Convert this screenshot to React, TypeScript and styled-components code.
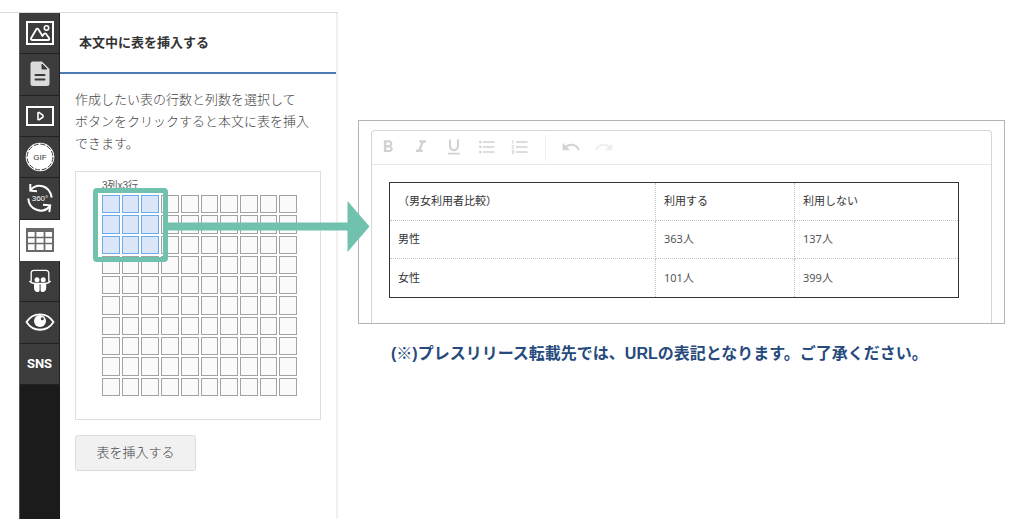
import React, { useState } from 'react';
import styled, { createGlobalStyle } from 'styled-components';
import {
  MdFormatBold,
  MdFormatItalic,
  MdFormatUnderlined,
  MdFormatListBulleted,
  MdFormatListNumbered,
  MdUndo,
  MdRedo,
} from 'react-icons/md';

const sans = `"Liberation Sans", "Noto Sans CJK JP", sans-serif`;
const teal = '#70c1ae';

const GlobalStyle = createGlobalStyle`
  *, *::before, *::after { box-sizing: border-box; }
  body { margin: 0; background: #fff; color: #444; font-family: ${sans}; font-size: 13px; }
  button { font-family: inherit; cursor: pointer; }
  h2, p, ul { margin: 0; padding: 0; }
`;

const Page = styled.div`
  display: flex;
  align-items: stretch;
  min-height: 100vh;
  padding: 12px 0;
`;

const Composer = styled.aside`
  display: flex;
  flex: 0 0 338px;
  padding-left: 19px;
  border-top: 1px solid #dcdcdc;
`;

const Rail = styled.nav`
  flex: 0 0 41px;
  background: #1b1b1b;
  border-left: 1px solid #555;
`;

const RailList = styled.ul`
  display: grid;
  grid-template-rows: repeat(9, 1fr);
  height: 372px;
  list-style: none;
`;

const RailButton = styled.button<{ $active?: boolean }>`
  display: flex;
  align-items: center;
  justify-content: center;
  width: 100%;
  height: 100%;
  padding: 0;
  border: 0;
  border-right: 1px solid ${(p) => (p.$active ? '#fff' : '#222')};
  border-bottom: 1px solid ${(p) => (p.$active ? '#fff' : '#222')};
  background: ${(p) => (p.$active ? '#fff' : '#3c3c3c')};
  color: ${(p) => (p.$active ? '#6a6a6a' : '#fff')};
  font: 700 13px Roboto, sans-serif;

  svg { display: block; }
`;

const Panel = styled.section`
  flex: 1;
  min-width: 0;
  border-right: 2px solid #f0f0f0;
`;

const PanelTitle = styled.h2`
  padding: 19px;
  border-bottom: 2px solid #4d7ab5;
  color: #333;
  font-size: 13px;
  line-height: 21px;
  font-weight: 700;
`;

const PanelBody = styled.div`
  padding: 15px;
`;

const Description = styled.p`
  color: #444;
  font-size: 13px;
  line-height: 22px;
  font-weight: 300;
`;

const Picker = styled.div`
  margin: 16px 0 15px;
  padding: 6px 23px 23px 26px;
  border: 1px solid #dedede;
`;

const PickerLabel = styled.div`
  height: 17px;
  color: #555;
  font-size: 10px;
  line-height: 15px;
`;

const CellGrid = styled.div`
  position: relative;
  display: grid;
  grid-template-columns: repeat(10, 1fr);
  grid-template-rows: repeat(10, 1fr);
  gap: 2px;
  height: 201px;
`;

const Cell = styled.button<{ $on: boolean }>`
  min-width: 0;
  padding: 0;
  border: 1px solid ${(p) => (p.$on ? '#6aabf0' : '#a2a2a2')};
  background: ${(p) => (p.$on ? '#dbe7f9' : '#fafafa')};
`;

const SelectionFrame = styled.div`
  position: absolute;
  top: -7px;
  left: -9px;
  width: 75px;
  height: 74px;
  border: 5px solid ${teal};
  border-radius: 4px;
  pointer-events: none;
`;

const Arrow = styled.svg`
  position: absolute;
  top: 6px;
  left: 65px;
  overflow: visible;
  pointer-events: none;
`;

const InsertButton = styled.button`
  width: 121px;
  height: 36px;
  padding: 0 0 4px;
  border: 1px solid #dcdcdc;
  border-radius: 3px;
  background: #f1f1f1;
  color: #444;
  font-size: 13px;
  font-weight: 300;
`;

const Preview = styled.main`
  flex: 1;
  min-width: 0;
  padding: 108px 19px 0 20px;
`;

const PreviewFrame = styled.div`
  padding: 9px 12px 0;
  border: 1px solid #b4b4b4;
`;

const Editor = styled.div`
  border: 1px solid #d6d6d6;
  border-bottom: 0;
  border-radius: 4px 4px 0 0;
`;

const Toolbar = styled.div`
  display: flex;
  align-items: center;
  height: 34px;
  border-bottom: 1px solid #e8e8e8;
`;

const ToolButton = styled.button<{ $muted?: boolean }>`
  display: flex;
  align-items: center;
  justify-content: center;
  width: 33px;
  height: 32px;
  padding: 0 2px 1px 0;
  border: 0;
  background: none;
  color: ${(p) => (p.$muted ? '#eee' : '#d2d2d2')};
`;

const ToolDivider = styled.span`
  width: 1px;
  height: 26px;
  margin: 0 9px 0 8px;
  background: #f0f0f0;
`;

const EditorBody = styled.div`
  padding: 17px 32px 25px 17px;
`;

const DataTable = styled.table`
  width: 100%;
  table-layout: fixed;
  border-collapse: collapse;
  border: 1px solid #333;
  color: #555;
  font-family: "Noto Sans", "Noto Sans CJK JP", sans-serif;
  font-size: 11px;
  line-height: 16px;
`;

const DataCell = styled.td<{ $width?: string }>`
  width: ${(p) => p.$width ?? 'auto'};
  height: 38px;
  padding: 0 8px 1px;
  border: 1px dotted #c4c4c4;

  tr:first-child & { border-top: 1px solid #333; color: #333; }
  tr:last-child & { height: 39px; border-bottom: 1px solid #333; }
  &:first-child { border-left: 1px solid #333; color: #333; }
  &:last-child { border-right: 1px solid #333; }
`;

const Note = styled.p`
  padding: 18px 0 0 33px;
  color: #264a7c;
  font-size: 16px;
  line-height: 24px;
  font-weight: 700;
`;

const ImageIcon = () => (
  <svg width="28" height="24" viewBox="0 0 28 24" fill="none" stroke="#fff" strokeWidth="2">
    <rect x="1" y="1" width="26" height="22" />
    <path d="M6.500 19h15.500c1.400 0 1.600-1 1-2l-3-4.200c-.6-.7-1.300-.7-1.900 0L16.500 15l-4.200-6.800c-.6-.9-1.500-.9-2 0L5.200 17c-.7 1.200 0 2 1.300 2z" strokeWidth="1.800" strokeLinejoin="round" />
    <circle cx="20.500" cy="7" r="2.200" strokeWidth="1.600" />
  </svg>
);

const DocumentIcon = () => (
  <svg width="20" height="26" viewBox="0 0 20 26">
    <path d="M3 .5h9L19.500 8v14.500a2.500 2.500 0 0 1-2.500 2.500H3A2.500 2.500 0 0 1 .5 22.500V3A2.500 2.500 0 0 1 3 .5z" fill="#dadada" />
    <path d="M12 3v5h5z" fill="#3c3c3c" stroke="#3c3c3c" strokeWidth="1" />
    <path d="M5.500 14h9M5.500 18.500h9" stroke="#3c3c3c" strokeWidth="2" strokeLinecap="round" />
  </svg>
);

const VideoIcon = () => (
  <svg width="28" height="20" viewBox="0 0 28 20" fill="none" stroke="#fff" strokeWidth="2">
    <rect x="1" y="1" width="26" height="18" />
    <path d="M12 6.800v6.600l1 .4 4-2.800v-1.600l-4-3z" strokeWidth="1.600" strokeLinejoin="round" />
  </svg>
);

const GifIcon = () => (
  <svg width="30" height="30" viewBox="0 0 30 30">
    <circle cx="15" cy="15" r="14.300" fill="#fff" />
    <circle cx="15" cy="15" r="12.900" fill="none" stroke="#3c3c3c" strokeWidth="1" strokeDasharray="5 1.750" />
    <text x="15" y="18" textAnchor="middle" fontFamily="Liberation Sans, sans-serif" fontSize="8" fontWeight="400" fill="#333">GIF</text>
  </svg>
);

const RotateIcon = () => (
  <svg width="30" height="30" viewBox="0 0 30 30" fill="none" stroke="#fff" strokeWidth="2">
    <path d="M5.500 7C12-.3 24.500 2 26.700 14.500" />
    <path d="M3.300 15.500C4 27 17.500 31.500 24.500 23.500" />
    <path d="M5.300 1v6.700l6.700.6" />
    <path d="M18 21.700l7.200.6-.9 6.700" />
    <text x="15" y="18" textAnchor="middle" fontFamily="Liberation Sans, sans-serif" fontSize="8" fontWeight="400" fill="#fff" stroke="none">360°</text>
  </svg>
);

const TableIcon = () => (
  <svg width="28" height="24" viewBox="0 0 28 24" fill="none" stroke="#6a6a6a">
    <rect x="1" y="1" width="26" height="22" strokeWidth="2" />
    <path d="M1 3h26" strokeWidth="2" />
    <path d="M1 9.500h26M1 15.500h26M9.500 3v20M18.500 3v20" strokeWidth="1.700" />
  </svg>
);

const SlidesIcon = () => (
  <svg width="24" height="24" viewBox="0 0 24 24">
    <path d="M3.200 12.500V4.200c0-2 1-2.900 2.800-2.900h12c1.800 0 2.800.9 2.800 2.900v8.300" fill="none" stroke="#fff" strokeWidth="1.300" />
    <path d="M1.500 11.800c1.400 2.200 3.500 2.600 6 2.600h9c2.500 0 4.600-.4 6-2.600" fill="none" stroke="#fff" strokeWidth="1.500" />
    <circle cx="9" cy="10.800" r="2.500" fill="#fff" />
    <circle cx="15.200" cy="10.800" r="2.500" fill="#fff" />
    <path d="M6 14h5.600v7c0 1.500-.8 2-2 2-2.400 0-3.600-1.700-3.600-4zM12.600 14h5.600v5c0 2.300-1.200 4-3.600 4-1.200 0-2-.5-2-2z" fill="#fff" />
  </svg>
);

const EyeIcon = () => (
  <svg width="30" height="18" viewBox="0 0 30 18">
    <path d="M1.500 9C8-1.300 22-1.300 28.500 9 22 19.300 8 19.300 1.500 9z" fill="none" stroke="#fff" strokeWidth="1.800" />
    <circle cx="15" cy="8" r="6" fill="#fff" />
    <circle cx="17.300" cy="5.800" r="1.500" fill="#3c3c3c" />
  </svg>
);

const railItems = [
  { label: '画像', icon: <ImageIcon /> },
  { label: '文書', icon: <DocumentIcon /> },
  { label: '動画', icon: <VideoIcon /> },
  { label: 'GIF', icon: <GifIcon /> },
  { label: '360°', icon: <RotateIcon /> },
  { label: '表', icon: <TableIcon />, active: true },
  { label: 'スライド', icon: <SlidesIcon /> },
  { label: 'プレビュー', icon: <EyeIcon /> },
  { label: 'SNS', icon: 'SNS' },
];

const tools = [
  { label: '太字', Icon: MdFormatBold },
  { label: '斜体', Icon: MdFormatItalic },
  { label: '下線', Icon: MdFormatUnderlined },
  { label: '箇条書き', Icon: MdFormatListBulleted },
  { label: '番号付きリスト', Icon: MdFormatListNumbered },
];

const rows = [
  ['（男女利用者比較）', '利用する', '利用しない'],
  ['男性', '363人', '137人'],
  ['女性', '101人', '399人'],
];

const columnWidths = ['266px', '139px', 'auto'];

export default function App() {
  const [size, setSize] = useState({ cols: 3, rows: 3 });

  return (
    <>
      <GlobalStyle />
      <Page>
        <Composer>
          <Rail>
            <RailList>
              {railItems.map((item) => (
                <li key={item.label}>
                  <RailButton type="button" aria-label={item.label} $active={item.active}>
                    {item.icon}
                  </RailButton>
                </li>
              ))}
            </RailList>
          </Rail>
          <Panel>
            <PanelTitle>本文中に表を挿入する</PanelTitle>
            <PanelBody>
              <Description>
                作成したい表の行数と列数を選択して
                <br />
                ボタンをクリックすると本文に表を挿入
                <br />
                できます。
              </Description>
              <Picker>
                <PickerLabel>{`${size.cols}列x${size.rows}行`}</PickerLabel>
                <CellGrid>
                  {Array.from({ length: 100 }, (_, i) => {
                    const col = (i % 10) + 1;
                    const row = Math.floor(i / 10) + 1;
                    return (
                      <Cell
                        key={i}
                        type="button"
                        aria-label={`${col}列${row}行`}
                        $on={col <= size.cols && row <= size.rows}
                        onClick={() => setSize({ cols: col, rows: row })}
                      />
                    );
                  })}
                  <SelectionFrame />
                  <Arrow width="203" height="51" viewBox="0 0 203 51" aria-hidden="true">
                    <path d="M0 21.500h180.500V0L202.500 25.500 180.500 51V29.500H0z" fill={teal} />
                  </Arrow>
                </CellGrid>
              </Picker>
              <InsertButton type="button">表を挿入する</InsertButton>
            </PanelBody>
          </Panel>
        </Composer>
        <Preview>
          <PreviewFrame>
            <Editor>
              <Toolbar>
                {tools.map(({ label, Icon }) => (
                  <ToolButton key={label} type="button" aria-label={label}>
                    <Icon size={20} />
                  </ToolButton>
                ))}
                <ToolDivider />
                <ToolButton type="button" aria-label="元に戻す">
                  <MdUndo size={20} />
                </ToolButton>
                <ToolButton type="button" aria-label="やり直す" $muted>
                  <MdRedo size={20} />
                </ToolButton>
              </Toolbar>
              <EditorBody>
                <DataTable>
                  <tbody>
                    {rows.map((row) => (
                      <tr key={row[0]}>
                        {row.map((text, i) => (
                          <DataCell key={text} $width={columnWidths[i]}>
                            {text}
                          </DataCell>
                        ))}
                      </tr>
                    ))}
                  </tbody>
                </DataTable>
              </EditorBody>
            </Editor>
          </PreviewFrame>
          <Note>(※)プレスリリース転載先では、URLの表記となります。ご了承ください。</Note>
        </Preview>
      </Page>
    </>
  );
}
